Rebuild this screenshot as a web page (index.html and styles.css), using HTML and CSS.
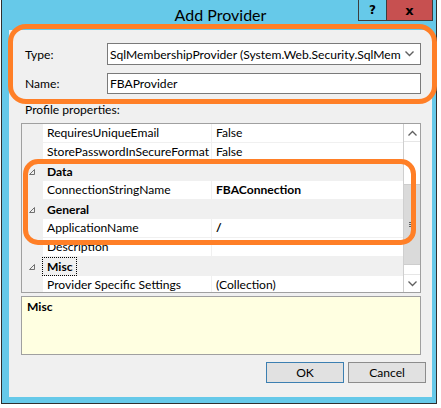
FILE: index.html
```html
<!DOCTYPE html>
<html>
<head>
<meta charset="utf-8">
<link rel="stylesheet" href="styles.css">
</head>
<body>
<div class="window">
  <div class="titlebar">
    <span class="title">Add Provider</span>
    <div class="caption-btns">
      <div class="cap help">?</div>
      <div class="cap close">x</div>
    </div>
  </div>
  <div class="client">
    <div class="field-row">
      <span class="field-label">Type:</span>
      <div class="combo">
        <span class="combo-text">SqlMembershipProvider (System.Web.Security.SqlMem</span>
        <svg class="combo-arrow" width="9" height="6" viewBox="0 0 9 6"><polyline points="0.5,0.5 4.5,4.5 8.5,0.5" fill="none" stroke="#606060" stroke-width="1.4"/></svg>
      </div>
    </div>
    <div class="field-row second">
      <span class="field-label">Name:</span>
      <div class="textbox">FBAProvider</div>
    </div>
    <div class="section-label">Profile properties:</div>
    <div class="pgrid">
      <div class="prows">
        <div class="prow"><div class="margin"></div><div class="pname">RequiresUniqueEmail</div><div class="pval">False</div></div>
        <div class="prow"><div class="margin"></div><div class="pname">StorePasswordInSecureFormat</div><div class="pval">False</div></div>
        <div class="cat"><div class="margin"><svg width="6" height="6" viewBox="0 0 6 6"><polygon points="5.5,0.5 5.5,5.5 0.5,5.5" fill="none" stroke="#707070" stroke-width="1"/></svg></div><span class="cat-name">Data</span></div>
        <div class="prow"><div class="margin"></div><div class="pname">ConnectionStringName</div><div class="pval bold">FBAConnection</div></div>
        <div class="cat"><div class="margin"><svg width="6" height="6" viewBox="0 0 6 6"><polygon points="5.5,0.5 5.5,5.5 0.5,5.5" fill="none" stroke="#707070" stroke-width="1"/></svg></div><span class="cat-name">General</span></div>
        <div class="prow"><div class="margin"></div><div class="pname">ApplicationName</div><div class="pval bold">/</div></div>
        <div class="prow"><div class="margin"></div><div class="pname">Description</div><div class="pval"></div></div>
        <div class="cat"><div class="margin"><svg width="6" height="6" viewBox="0 0 6 6"><polygon points="5.5,0.5 5.5,5.5 0.5,5.5" fill="none" stroke="#707070" stroke-width="1"/></svg></div><span class="cat-name focus">Misc</span></div>
        <div class="prow"><div class="margin"></div><div class="pname">Provider Specific Settings</div><div class="pval">(Collection)</div></div>
      </div>
      <div class="scrollbar">
        <div class="sb-btn up"><svg width="9" height="6" viewBox="0 0 9 6"><polyline points="0.5,5.5 4.5,1.5 8.5,5.5" fill="none" stroke="#606060" stroke-width="1.3"/></svg></div>
        <div class="sb-track top"></div>
        <div class="sb-thumb"><div class="grip"></div><div class="grip"></div><div class="grip"></div></div>
        <div class="sb-track bottom"></div>
        <div class="sb-btn down"><svg width="9" height="6" viewBox="0 0 9 6"><polyline points="0.5,0.5 4.5,4.5 8.5,0.5" fill="none" stroke="#606060" stroke-width="1.3"/></svg></div>
      </div>
    </div>
    <div class="desc"><span class="desc-title">Misc</span></div>
    <div class="buttons">
      <div class="btn default">OK</div>
      <div class="btn">Cancel</div>
    </div>
  </div>
</div>
<div class="highlight hl-top"></div>
<div class="highlight hl-mid"></div>
</body>
</html>
```

FILE: styles.css
```css
html, body {
  margin: 0;
  padding: 0;
  background: #ffffff;
}
body {
  font-family: Lato, "Noto Sans", sans-serif;
  font-size: 12.1px;
  color: #000;
  width: 441px;
  height: 408px;
  position: relative;
  overflow: hidden;
}
.window {
  margin-left: 1px;
  width: 436px;
  height: 404px;
  box-sizing: border-box;
  background: #66c9e9;
  border: 1px solid #2f2f2f;
  border-top: none;
  padding: 0 4px 6px 7px;
  display: flex;
  flex-direction: column;
  position: relative;
}
.titlebar {
  height: 30px;
  flex: none;
  display: flex;
  align-items: center;
  justify-content: center;
}
.title {
  font-size: 16px;
  color: #000;
  margin-bottom: 2px;
}
.caption-btns {
  position: absolute;
  top: 0;
  right: 3px;
  display: flex;
}
.cap {
  height: 21px;
  box-sizing: border-box;
  display: flex;
  align-items: center;
  justify-content: center;
  font-weight: bold;
  font-family: "DejaVu Sans", sans-serif;
}
.help {
  width: 29px;
  border: 1px solid #3d3d3d;
  border-top: none;
  font-size: 12px;
}
.close {
  width: 46px;
  background: #c75050;
  border: 1px solid #3d3d3d;
  border-left: none;
  border-top: none;
  font-size: 13px;
}
.client {
  flex: 1;
  background: #f0f0f0;
  display: flex;
  flex-direction: column;
  padding-top: 13px;
}
.field-row {
  display: flex;
  align-items: center;
}
.field-row.second {
  margin-top: 8px;
}
.field-label {
  width: 82px;
  padding-left: 16px;
  flex: none;
}
.combo {
  width: 314px;
  height: 22px;
  box-sizing: border-box;
  border: 1px solid #7a7a7a;
  background: #fff;
  display: flex;
  align-items: center;
  padding-left: 2px;
  overflow: hidden;
}
.combo-text {
  flex: 1;
  white-space: nowrap;
}
.combo-arrow {
  flex: none;
  margin: 0 6px 0 4px;
}
.textbox {
  width: 314px;
  height: 21px;
  box-sizing: border-box;
  border: 1px solid #7a7a7a;
  background: #fff;
  display: flex;
  align-items: center;
  padding-left: 2px;
}
.section-label {
  margin-top: 8px;
  padding-left: 16px;
  height: 16px;
  line-height: 16px;
}
.pgrid {
  margin-top: 5px;
  margin-left: 12px;
  width: 400px;
  height: 170px;
  box-sizing: border-box;
  border: 1px solid #a0a0a0;
  display: flex;
  overflow: hidden;
  background: #fff;
}
.prows {
  width: 381px;
  flex: none;
  display: flex;
  flex-direction: column;
}
.prow, .cat {
  height: 19px;
  flex: none;
  display: flex;
  box-sizing: border-box;
}
.prow .margin, .cat .margin {
  width: 21px;
  flex: none;
  background: #f0f0f0;
  display: flex;
  align-items: center;
  justify-content: flex-end;
  padding-right: 8px;
  box-sizing: border-box;
}
.pname {
  width: 164px;
  flex: none;
  border-bottom: 1px solid #f0f0f0;
  border-right: 1px solid #f0f0f0;
  padding-left: 4px;
  line-height: 18px;
  white-space: nowrap;
  overflow: hidden;
}
.pval {
  flex: 1;
  border-bottom: 1px solid #f0f0f0;
  padding-left: 4px;
  line-height: 18px;
  white-space: nowrap;
}
.bold {
  font-weight: bold;
}
.cat {
  background: #f0f0f0;
  align-items: center;
}
.cat-name {
  font-weight: bold;
  padding-left: 4px;
  line-height: 17px;
}
.cat-name.focus {
  border: 1px dotted #000;
  margin-left: -1px;
  padding: 0 3px 0 4px;
}
.scrollbar {
  width: 17px;
  flex: none;
  display: flex;
  flex-direction: column;
  border-left: 1px solid #cfcfcf;
  box-sizing: border-box;
  background: #fff;
}
.sb-btn {
  height: 17px;
  flex: none;
  display: flex;
  align-items: center;
  justify-content: center;
}
.sb-btn.up {
  border-bottom: 1px solid #e6e6e6;
}
.sb-btn.down {
  border-top: 1px solid #e6e6e6;
}
.sb-track.top {
  height: 42px;
  flex: none;
}
.sb-thumb {
  height: 81px;
  flex: none;
  background: #dadada;
  border-top: 1px solid #cdcdcd;
  border-bottom: 1px solid #cdcdcd;
  box-sizing: border-box;
  display: flex;
  flex-direction: column;
  align-items: center;
  justify-content: center;
  gap: 1px;
}
.grip {
  width: 6px;
  height: 1px;
  background: #606060;
}
.sb-track.bottom {
  flex: 1;
}
.desc {
  margin-top: 3px;
  margin-left: 12px;
  width: 400px;
  height: 59px;
  box-sizing: border-box;
  border: 1px solid #a0a0a0;
  background: #ffffe1;
  padding: 2px 5px;
}
.desc-title {
  font-weight: bold;
}
.buttons {
  margin-top: 7px;
  display: flex;
  justify-content: flex-end;
  gap: 4px;
  padding-right: 6px;
}
.btn {
  width: 78px;
  height: 21px;
  box-sizing: border-box;
  background: #e1e1e1;
  border: 1px solid #8c8c8c;
  display: flex;
  align-items: center;
  justify-content: center;
}
.btn.default {
  border-color: #3c7fb1;
}
.highlight {
  position: absolute;
  border: 5px solid #ff7f27;
  box-sizing: border-box;
  pointer-events: none;
}
.hl-top {
  left: 8px;
  top: 24px;
  width: 429px;
  height: 80px;
  border-radius: 18px;
}
.hl-mid {
  left: 23px;
  top: 159px;
  width: 393px;
  height: 86px;
  border-radius: 15px;
}
```
